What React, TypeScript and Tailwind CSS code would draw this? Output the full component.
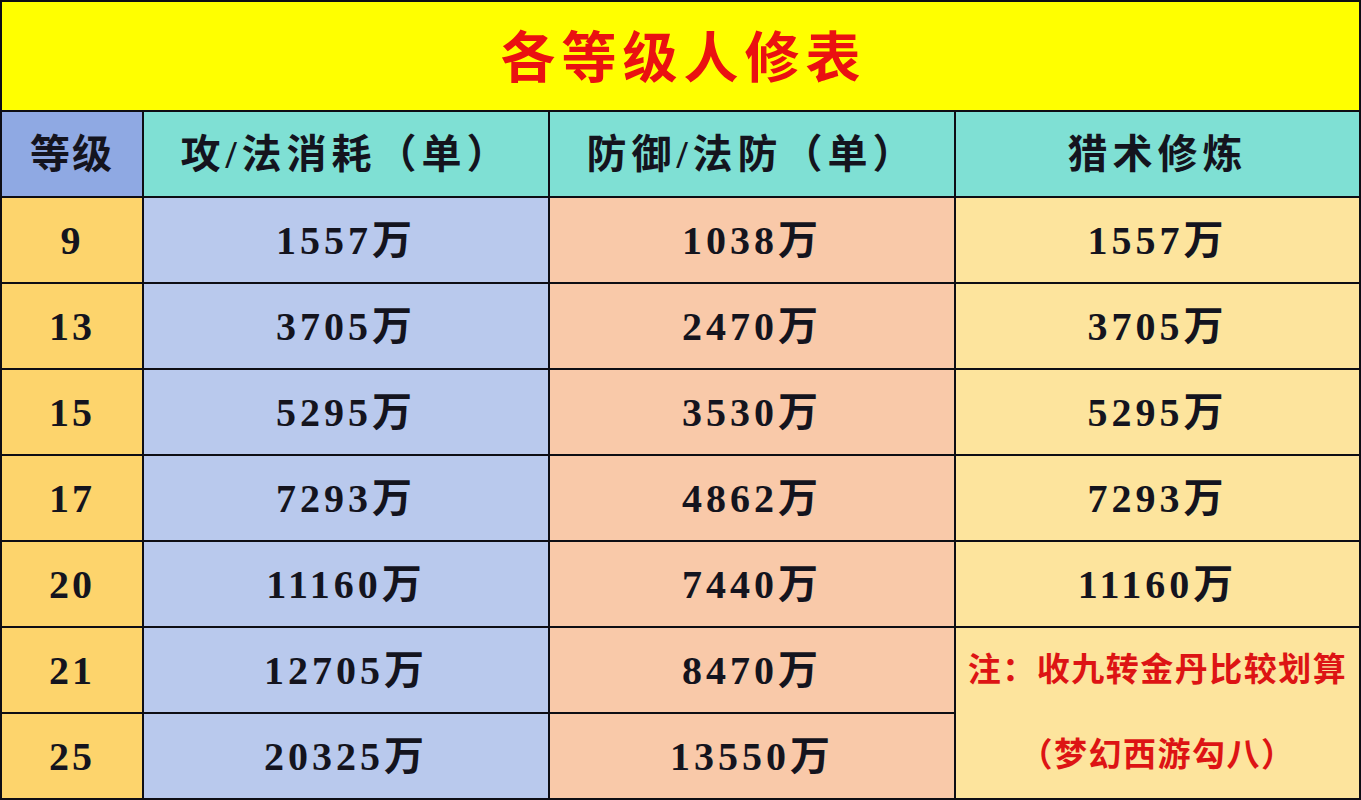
import React from "react";

const rows = [
  ["9", "1557万", "1038万", "1557万"],
  ["13", "3705万", "2470万", "3705万"],
  ["15", "5295万", "3530万", "5295万"],
  ["17", "7293万", "4862万", "7293万"],
  ["20", "11160万", "7440万", "11160万"],
  ["21", "12705万", "8470万", null],
  ["25", "20325万", "13550万", null],
];

const font = { fontFamily: '"Liberation Serif", "Noto Sans CJK SC", serif' };

export default function App() {
  return (
    <div
      className="w-[1361px] h-[800px] bg-[#0d0d14] p-[2px] grid gap-[2px] grid-cols-[140px_404px_404px_403px] grid-rows-[108px_repeat(8,84px)] text-[#14141e] font-bold"
      style={font}
    >
      <div className="col-span-4 bg-[#ffff00] flex items-center justify-center text-[55px] text-[#ea1111] tracking-[6px] pl-[6px] pt-[6px]">
        各等级人修表
      </div>
      <div className="bg-[#8fa9e3] flex items-center justify-center text-[40px] tracking-[2px] pt-[2px]">等级</div>
      <div className="bg-[#7fe0d4] flex items-center justify-center text-[40px] tracking-[5px] pt-[2px]">攻/法消耗（单）</div>
      <div className="bg-[#7fe0d4] flex items-center justify-center text-[40px] tracking-[5px] pt-[2px]">防御/法防（单）</div>
      <div className="bg-[#7fe0d4] flex items-center justify-center text-[40px] tracking-[5px] pt-[2px]">猎术修炼</div>
      {rows.map((r, i) => (
        <React.Fragment key={i}>
          <div className="bg-[#fdd46c] flex items-center justify-center text-[40px] tracking-[3px] pt-[2px]">{r[0]}</div>
          <div className="bg-[#b9c9ed] flex items-center justify-center text-[40px] tracking-[4px] pt-[2px]">{r[1]}</div>
          <div className="bg-[#f9c9a9] flex items-center justify-center text-[40px] tracking-[4px] pt-[2px]">{r[2]}</div>
          {r[3] !== null ? (
            <div className="bg-[#fde49d] flex items-center justify-center text-[40px] tracking-[4px] pt-[2px]">{r[3]}</div>
          ) : i === 5 ? (
            <div className="row-span-2 bg-[#fde49d] grid grid-rows-2 items-center justify-items-center text-[33px] text-[#dd1414]">
              <span className="tracking-[1.5px]">注：收九转金丹比较划算</span>
              <span className="tracking-[1.5px]">（梦幻西游勾八）</span>
            </div>
          ) : null}
        </React.Fragment>
      ))}
    </div>
  );
}
